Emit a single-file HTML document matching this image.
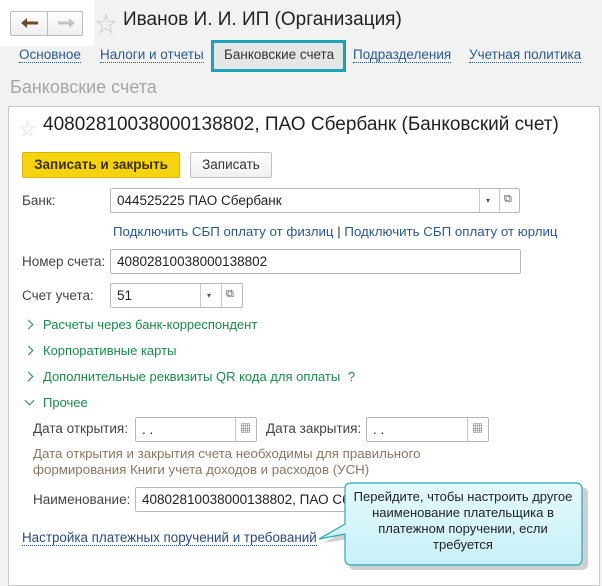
<!DOCTYPE html>
<html><head><meta charset="utf-8"><style>
*{margin:0;padding:0;box-sizing:border-box}
body{width:602px;height:579px;overflow:hidden;background:#f2f2f2;font-family:"Liberation Sans","Noto Sans CJK SC",sans-serif;font-size:13px;color:#333;position:relative}
.a{position:absolute;white-space:nowrap}
.f{position:absolute;background:#fff;border:1px solid #b8b8b8;border-radius:2px;height:25px;line-height:23px;padding-left:6px;font-size:13.5px;color:#222}
.tab{position:absolute;top:47px;color:#2a5a8c;border-bottom:1px dotted #2a5a8c;line-height:15px;font-size:13.5px}
.g{color:#1a8a4a;font-size:13px}
.chev{position:absolute;width:7px;height:7px;border-right:1.5px solid #1a8a4a;border-bottom:1.5px solid #1a8a4a;transform:rotate(-45deg)}
.dv{position:absolute;top:0;bottom:0;border-left:1px solid #c8c8c8}
.lbl{color:#444;font-size:13.5px}
</style></head><body>
<div class="a" style="left:0;top:0;width:94px;height:46px;background:#fff"></div>
<div class="a" style="left:10px;top:11px;width:73px;height:25px;border:1px solid #bbb;border-radius:2px;background:linear-gradient(#fff,#eee)"></div>
<div class="a" style="left:47px;top:11px;height:25px;border-left:1px solid #bbb"></div>
<svg class="a" style="left:20px;top:17px" width="20" height="12"><path d="M1 6 L7 1 L7 4.5 L18 4.5 L18 7.5 L7 7.5 L7 11 Z" fill="#6b4a2a"/></svg>
<svg class="a" style="left:56px;top:17px" width="20" height="12"><path d="M19 6 L13 1 L13 4.5 L2 4.5 L2 7.5 L13 7.5 L13 11 Z" fill="#c4c4c4"/></svg>
<div class="a" style="left:95px;top:7px;font-size:22px;color:#ccc">☆</div>
<div class="a" style="left:123px;top:9px;font-size:19px;color:#222">Иванов И. И. ИП (Организация)</div>
<div class="tab" style="left:19px">Основное</div>
<div class="tab" style="left:100px">Налоги и отчеты</div>
<div class="a" style="left:211px;top:40px;width:135px;height:32px;border:3px solid #1aa3b8;background:#e6e6e6"></div>
<div class="a" style="left:224px;top:47px;color:#333;font-size:13.5px;line-height:15px">Банковские счета</div>
<div class="tab" style="left:353px">Подразделения</div>
<div class="tab" style="left:469px">Учетная политика</div>
<div class="a" style="left:10px;top:77px;font-size:18px;color:#a6a6a6">Банковские счета</div>

<div class="a" style="left:8px;top:106px;width:592px;height:480px;background:#fff;border:1px solid #c8c8c8"></div>
<div class="a" style="left:19px;top:115px;font-size:17px;color:#ddd">☆</div>
<div class="a" style="left:43px;top:114px;font-size:19px;color:#222">40802810038000138802, ПАО Сбербанк (Банковский счет)</div>
<div class="a" style="left:22px;top:152px;width:158px;height:26px;background:#f5d40f;border:1px solid #d8b400;border-radius:2px;text-align:center;line-height:24px;font-weight:bold;color:#3a2f00;font-size:13.5px">Записать и закрыть</div>
<div class="a" style="left:190px;top:152px;width:82px;height:26px;background:linear-gradient(#fff,#f0f0f0);border:1px solid #c0c0c0;border-radius:2px;text-align:center;line-height:24px;color:#333;font-size:13.5px">Записать</div>

<div class="a lbl" style="left:22px;top:193px">Банк:</div>
<div class="f" style="left:110px;top:188px;width:410px">044525225 ПАО Сбербанк<div class="dv" style="left:368px"></div><div class="dv" style="left:388px"></div><span class="a" style="left:375px;top:0;font-size:8px;color:#555">▾</span><span class="a" style="left:393px;top:-1px;font-size:11px;color:#555">⧉</span></div>
<div class="a" style="left:113px;top:224px;color:#2a5a8c;font-size:13.3px">Подключить СБП оплату от физлиц <span style="color:#333">|</span> Подключить СБП оплату от юрлиц</div>

<div class="a lbl" style="left:22px;top:254px">Номер счета:</div>
<div class="f" style="left:110px;top:249px;width:411px">40802810038000138802</div>

<div class="a lbl" style="left:22px;top:288px">Счет учета:</div>
<div class="f" style="left:110px;top:283px;width:133px">51<div class="dv" style="left:89px"></div><div class="dv" style="left:110px"></div><span class="a" style="left:96px;top:0;font-size:8px;color:#555">▾</span><span class="a" style="left:115px;top:-1px;font-size:11px;color:#555">⧉</span></div>

<div class="chev" style="left:25px;top:321px"></div><div class="a g" style="left:43px;top:317px">Расчеты через банк-корреспондент</div>
<div class="chev" style="left:25px;top:347px"></div><div class="a g" style="left:43px;top:343px">Корпоративные карты</div>
<div class="chev" style="left:25px;top:373px"></div><div class="a g" style="left:43px;top:369px">Дополнительные реквизиты QR кода для оплаты <span style="color:#2a6ac0;margin-left:4px">?</span></div>
<div class="chev" style="left:26px;top:397px;transform:rotate(45deg)"></div><div class="a g" style="left:43px;top:395px">Прочее</div>

<div class="a lbl" style="left:33px;top:421px">Дата открытия:</div>
<div class="f" style="left:135px;top:417px;width:122px"> . .<div class="dv" style="left:99px"></div><span class="a" style="left:104px;top:0;font-size:11px;color:#555">▦</span></div>
<div class="a lbl" style="left:266px;top:421px">Дата закрытия:</div>
<div class="f" style="left:366px;top:417px;width:123px"> . .<div class="dv" style="left:100px"></div><span class="a" style="left:105px;top:0;font-size:11px;color:#555">▦</span></div>
<div class="a" style="left:33px;top:446px;color:#8a7660;line-height:16px;font-size:13.3px">Дата открытия и закрытия счета необходимы для правильного<br>формирования Книги учета доходов и расходов (УСН)</div>

<div class="a lbl" style="left:33px;top:492px">Наименование:</div>
<div class="f" style="left:135px;top:487px;width:260px;overflow:hidden">40802810038000138802, ПАО Сбербанк</div>
<div class="a" style="left:22px;top:530px;color:#2a4a7c;border-bottom:1px dotted #2a4a7c;line-height:15px;font-size:13.4px">Настройка платежных поручений и требований</div>

<svg class="a" style="left:315px;top:478px" width="275" height="95">
<defs><linearGradient id="gr" x1="0" y1="0" x2="0" y2="1"><stop offset="0" stop-color="#e4fafe"/><stop offset="1" stop-color="#c8f0f8"/></linearGradient></defs>
<path d="M36 7 Q31 7 31 12 L31 48 L5 62 L31 58 L31 83 Q31 89 37 89 L263 89 Q270 89 270 83 L270 12 Q270 6 263 6 Z" fill="#8a8a8a" opacity=".4" transform="translate(3,3)"/>
<path d="M36 5 Q30 5 30 11 L30 46 L4 61 L30 56 L30 81 Q30 87 36 87 L261 87 Q267 87 267 81 L267 11 Q267 5 261 5 Z" fill="url(#gr)" stroke="#2aa8c0" stroke-width="1.2"/>
</svg>
<div class="a" style="left:346px;top:489px;width:234px;text-align:center;font-size:13px;line-height:16px;color:#222">Перейдите, чтобы настроить другое<br>наименование плательщика в<br>платежном поручении, если<br>требуется</div>
</body></html>
